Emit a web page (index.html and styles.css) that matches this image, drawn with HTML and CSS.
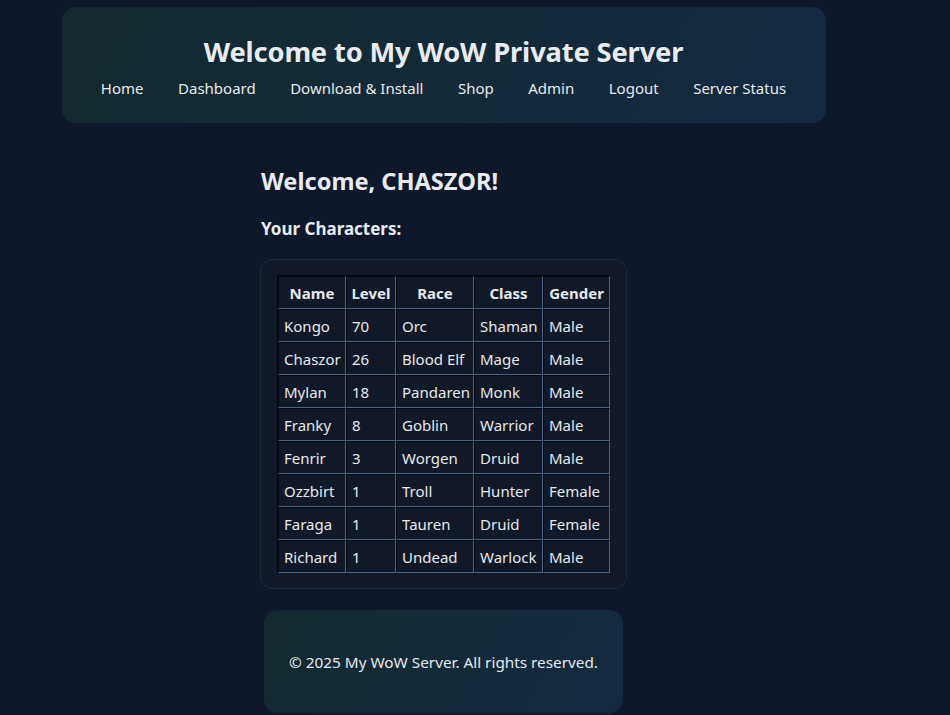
FILE: index.html
```html
<!DOCTYPE html>
<html lang="en">
<head>
<meta charset="utf-8">
<title>My WoW Private Server</title>
<link rel="stylesheet" href="styles.css">
</head>
<body>
<div class="page">
  <header class="site-header">
    <h1 class="site-title">Welcome to My WoW Private Server</h1>
    <nav class="nav">
      <a href="#">Home</a>
      <a href="#">Dashboard</a>
      <a href="#">Download &amp; Install</a>
      <a href="#">Shop</a>
      <a href="#">Admin</a>
      <a href="#">Logout</a>
      <a href="#">Server Status</a>
    </nav>
  </header>
  <main class="main">
    <h2 class="welcome">Welcome, CHASZOR!</h2>
    <h3 class="sub">Your Characters:</h3>
    <div class="card">
      <table class="chars">
        <colgroup>
          <col class="c-name"><col class="c-level"><col class="c-race"><col class="c-class"><col class="c-gender">
        </colgroup>
        <thead>
          <tr><th>Name</th><th>Level</th><th>Race</th><th>Class</th><th>Gender</th></tr>
        </thead>
        <tbody>
          <tr><td>Kongo</td><td>70</td><td>Orc</td><td>Shaman</td><td>Male</td></tr>
          <tr><td>Chaszor</td><td>26</td><td>Blood Elf</td><td>Mage</td><td>Male</td></tr>
          <tr><td>Mylan</td><td>18</td><td>Pandaren</td><td>Monk</td><td>Male</td></tr>
          <tr><td>Franky</td><td>8</td><td>Goblin</td><td>Warrior</td><td>Male</td></tr>
          <tr><td>Fenrir</td><td>3</td><td>Worgen</td><td>Druid</td><td>Male</td></tr>
          <tr><td>Ozzbirt</td><td>1</td><td>Troll</td><td>Hunter</td><td>Female</td></tr>
          <tr><td>Faraga</td><td>1</td><td>Tauren</td><td>Druid</td><td>Female</td></tr>
          <tr><td>Richard</td><td>1</td><td>Undead</td><td>Warlock</td><td>Male</td></tr>
        </tbody>
      </table>
    </div>
  </main>
  <footer class="site-footer">
    <p>&copy; 2025 My WoW Server. All rights reserved.</p>
  </footer>
</div>
</body>
</html>
```

FILE: styles.css
```css
html, body {
  margin: 0;
  padding: 0;
  background: #0f172a;
  color: #e5e7eb;
  font-family: "Noto Sans", "Open Sans", sans-serif;
}

.page {
  width: 887px;
  display: flex;
  flex-direction: column;
  align-items: center;
  padding-top: 7px;
}

.site-header {
  width: 764px;
  height: 116px;
  box-sizing: border-box;
  padding-top: 27px;
  border-radius: 14px;
  background: linear-gradient(120deg, #13292e 0%, #142a3a 60%, #13293f 100%);
  display: flex;
  flex-direction: column;
  align-items: center;
}

.site-title {
  margin: 0;
  font-size: 27.3px;
  line-height: 36px;
  font-weight: 700;
  color: #e8ecf2;
  letter-spacing: -0.15px;
}

.nav {
  margin-top: 7px;
  display: flex;
  gap: 34.5px;
  justify-content: center;
}

.nav a {
  color: #e5e9ef;
  text-decoration: none;
  font-size: 15px;
  line-height: 22px;
}

.main {
  width: 367px;
  display: flex;
  flex-direction: column;
  margin-top: 43px;
}

.welcome {
  margin: 0 0 0 1px;
  font-size: 23.6px;
  line-height: 30px;
  font-weight: 700;
  color: #e8ecf2;
}

.sub {
  margin: 21px 0 0 1px;
  font-size: 17px;
  line-height: 24px;
  font-weight: 700;
  color: #e8ecf2;
}

.card {
  margin-top: 18px;
  padding: 15px 16px 15px;
  border: 1px solid #1f2937;
  border-radius: 12px;
  background: #111827;
  box-sizing: border-box;
  width: 367px;
}

.chars {
  border-collapse: separate;
  border-spacing: 0;
  table-layout: fixed;
  width: 332px;
  border-top: 1px solid #05080f;
  border-left: 1px solid #05080f;
  background: #111827;
}

.c-name { width: 68px; }
.c-level { width: 50px; }
.c-race { width: 78px; }
.c-class { width: 69px; }
.c-gender { width: 67px; }

.chars th,
.chars td {
  height: 33px;
  box-sizing: border-box;
  padding: 0 5px;
  font-size: 15px;
  white-space: nowrap;
  overflow: hidden;
  border-right: 1px solid #4a6386;
  border-bottom: 1px solid #4a6386;
  border-top: 1px solid #05080f;
  border-left: 1px solid #05080f;
  color: #e6e9ee;
}

.chars th {
  font-weight: 700;
  text-align: center;
  padding: 0 3px;
}

.chars td {
  text-align: left;
}

.site-footer {
  margin-top: 21px;
  width: 359px;
  height: 103px;
  border-radius: 14px;
  background: linear-gradient(120deg, #13292e 0%, #142a3a 60%, #13293f 100%);
  display: flex;
  align-items: center;
  justify-content: center;
}

.site-footer p {
  margin: 0;
  font-size: 15.3px;
  color: #e5e9ef;
}
```
